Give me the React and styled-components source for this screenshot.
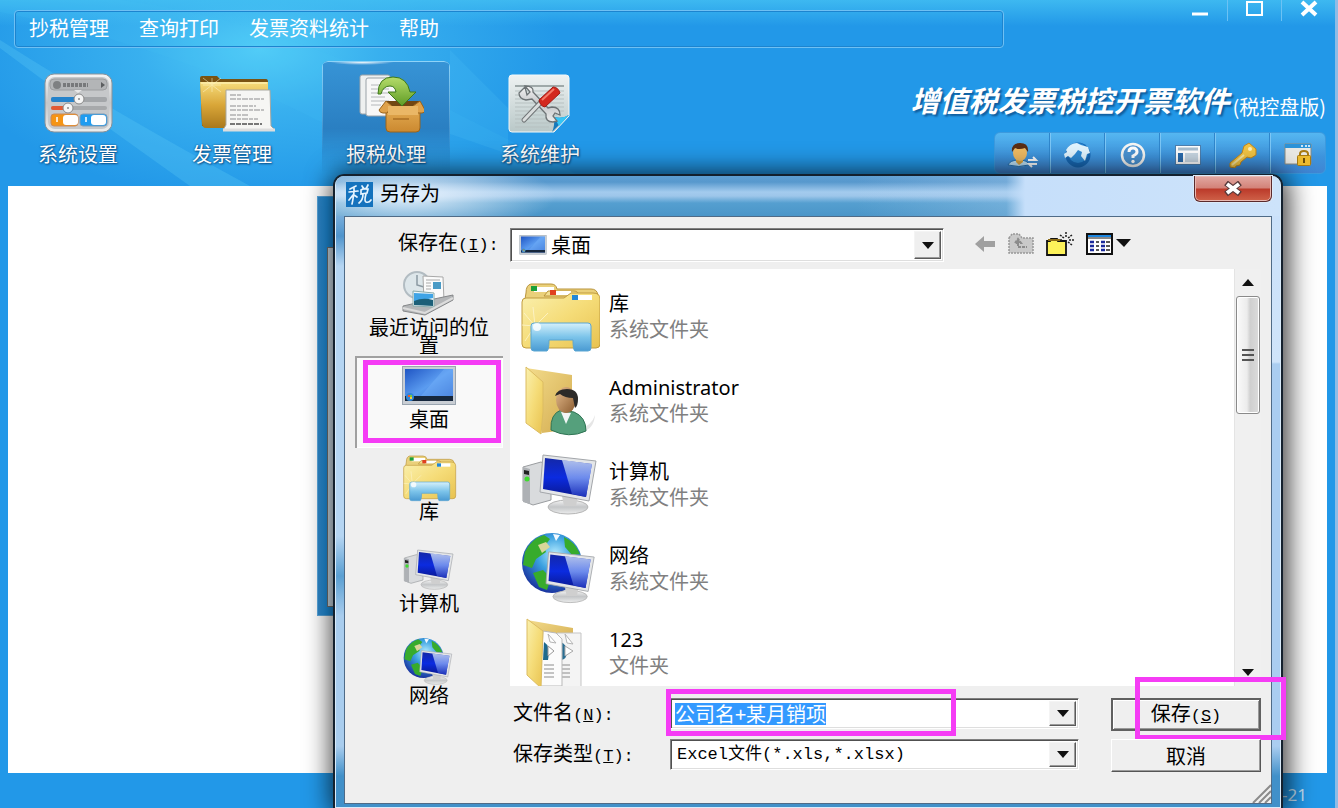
import React, { useEffect, useRef } from 'react';
import styled, { createGlobalStyle, css } from 'styled-components';

const GlobalStyle = createGlobalStyle`
    * {
        box-sizing: border-box;
    }
    body {
        margin: 0;
        font-family: 'Noto Sans', 'Noto Sans CJK SC', sans-serif;
        font-size: 20px;
        line-height: 26px;
        color: #000;
    }
    button, input, select {
        margin: 0;
        padding: 0;
        border: 0;
        background: none;
        font: inherit;
        color: inherit;
    }
    h1, h2, p, ul {
        margin: 0;
        padding: 0;
        font-weight: normal;
        list-style: none;
    }
    svg {
        display: block;
        flex: none;
    }
`;

const Page = styled.div`
    position: relative;
    display: flex;
    flex-direction: column;
    min-height: 100vh;
    overflow: hidden;
    background: #2298e8;
    border-right: 3px solid #8ebce6;
`;

const Header = styled.header`
    position: relative;
    height: 186px;
    background:
        linear-gradient(180deg, rgba(66, 190, 242, 0.85) 0, rgba(66, 190, 242, 0) 26px),
        radial-gradient(ellipse 300px 150px at 260px 50px, #52cdf7 0%, rgba(64, 184, 241, 0.75) 40%, rgba(34, 152, 232, 0) 100%),
        #2298e8;
`;

const Rays = styled.svg`
    position: absolute;
    left: 0;
    top: 0;
`;

const HeaderTop = styled.div`
    position: relative;
    display: flex;
    height: 61px;
    padding-left: 14px;
`;

const MenuBar = styled.nav`
    display: flex;
    flex: 1;
    align-items: center;
    gap: 30px;
    height: 38px;
    margin-top: 10px;
    padding-left: 14px;
    border: 1px solid #6fc0f3;
    border-radius: 4px;
    box-shadow: inset 0 0 0 1px #1c84cf;
`;

const MenuLink = styled.a`
    color: #fff;
    text-decoration: none;
`;

const WindowControls = styled.div`
    display: flex;
    flex: none;
    justify-content: flex-end;
    width: 331px;
`;

const WindowButton = styled.button`
    display: flex;
    justify-content: center;
    width: 54px;
    height: 21px;
    & + & {
        border-left: 1px solid #6cc2f4;
    }
`;

const HeaderMain = styled.div`
    position: relative;
    display: flex;
    justify-content: space-between;
    padding: 0 9px 0 14px;
`;

const ToolBar = styled.div`
    display: flex;
    gap: 26px;
`;

const ToolButton = styled.button`
    display: flex;
    flex-direction: column;
    align-items: center;
    width: 128px;
    height: 113px;
    padding-top: 12px;
    gap: 9px;
    color: #fff;
    text-shadow: 1px 1px 2px #0b4f87, 0 0 2px #0b4f87;
    border-radius: 6px 6px 0 0;
    ${p =>
        p.$active &&
        css`
            background:
                radial-gradient(ellipse 32px 3px at 40px 1px, #fff, rgba(255, 255, 255, 0)),
                linear-gradient(180deg, #8fd3f7, rgba(98, 180, 230, 0) 80%) left / 1px 100% no-repeat,
                linear-gradient(180deg, #8fd3f7, rgba(98, 180, 230, 0) 80%) right / 1px 100% no-repeat,
                linear-gradient(180deg, #3794d6 0, #2a7fc2 60%, rgba(42, 127, 194, 0) 100%);
            box-shadow: inset 0 2px 0 -1px #8fd3f7;
        `}
`;

const Side = styled.div`
    display: flex;
    flex-direction: column;
    align-items: flex-end;
`;

const Brand = styled.h1`
    display: flex;
    align-items: flex-end;
    height: 71px;
    padding-bottom: 13px;
    color: #fff;
    font-family: 'Noto Sans CJK SC', sans-serif;
    font-size: 29px;
    font-weight: bold;
    line-height: 40px;
    font-style: italic;
    text-shadow: 2px 2px 2px #0f5c9c;
`;

const Edition = styled.small`
    margin-left: 3px;
    font-size: 20px;
    font-weight: 400;
    font-style: normal;
    line-height: 24px;
    text-shadow: none;
`;

const QuickBar = styled.div`
    display: flex;
    height: 42px;
    border: 1px solid #3c9ade;
    border-radius: 6px;
    background: linear-gradient(180deg, #55b7f1 0, #3d93dc 60%, #3f85d3 100%);
`;

const QuickButton = styled.button`
    display: flex;
    align-items: center;
    justify-content: center;
    width: 55px;
    padding-top: 4px;
    & + & {
        border-left: 1px solid #7cc6f5;
        box-shadow: -1px 0 0 #2f86cc;
    }
`;

const Workspace = styled.main`
    flex: 1;
    min-height: 587px;
    margin: 0 8px;
    padding: 10px 0 0 309px;
    background: #fff;
`;

const ChildWindow = styled.div`
    width: 700px;
    max-width: 90%;
    height: 420px;
    padding: 50px 9px 8px;
    background: linear-gradient(90deg, #2f87c9, #1f93e4 9px);
    border: 1px solid #5aa7dd;
`;

const ChildBody = styled.div`
    height: 100%;
    border: 1px solid #777;
    background: #d8e8f4;
`;

const StatusBar = styled.footer`
    height: 35px;
    padding: 9px 28px 0 0;
    color: #c4e2f7;
    font-size: 17px;
    text-align: right;
`;

const Dialog = styled.section`
    position: absolute;
    top: 174px;
    left: 333px;
    right: 52px;
    border: 2px solid #14212e;
    border-bottom: 0;
    border-radius: 11px 11px 0 0;
    padding: 0 9px 4px;
    background:
        linear-gradient(180deg, rgba(65, 144, 201, 0) 570px, #4190c9 600px),
        linear-gradient(180deg, #c9e0fa 0, #4f94cc 60px, #b5d5f2 90px, #b5d5f2 360px, #5a9fd2 400px, #a9cdee 440px) left / 9px 100% no-repeat,
        linear-gradient(180deg, #c9e0fa 0, #cfe4fa 186px, #aacdf0 188px);
    box-shadow: inset 0 0 0 1px #d9ebfa, 2px 2px 26px 4px rgba(0, 0, 0, 0.75);
`;

const TitleBar = styled.header`
    display: flex;
    align-items: flex-start;
    gap: 7px;
    height: 40px;
    margin: 0 -8px;
    padding: 6px 8px 0 10px;
    border-radius: 8px 8px 0 0;
    background:
        radial-gradient(ellipse 150px 38px at 70px 20px, rgba(235, 244, 253, 0.95) 0, rgba(200, 224, 246, 0) 100%),
        linear-gradient(90deg, rgba(201, 223, 247, 0) 55%, rgba(200, 223, 248, 0.25) 71%, #c6dffa 73%, #cde3fa 100%),
        linear-gradient(180deg, #5e9fd3 0, #5798cd 6px, #a3cbee 16px, #9dc6ea 20px, #559fd0 27px, #4a95c8 100%);
`;

const DialogTitle = styled.h2`
    flex: 1;
    font-size: 20px;
    line-height: 24px;
`;

const CloseButton = styled.button`
    display: flex;
    align-items: center;
    justify-content: center;
    width: 78px;
    height: 26px;
    margin-top: -6px;
    border: 1px solid #5b2a2c;
    border-top: 0;
    border-radius: 0 0 6px 6px;
    background: linear-gradient(180deg, #e2a9a3 0, #d38278 48%, #bb3a2a 52%, #cf6249 100%);
    box-shadow: inset 0 0 0 1px #e9b9b2, 0 0 0 1px #dcebf9;
`;

const DialogBody = styled.form`
    position: relative;
    display: grid;
    grid-template-columns: 165px minmax(0, 1fr);
    grid-template-rows: 36px auto auto;
    padding: 11px 10px 31px 0;
    border: 1px solid #4f6b87;
    background: #efefef;
    font-family: 'Noto Sans CJK SC', sans-serif;
`;

const FieldLabel = styled.label`
    line-height: 28px;
    white-space: nowrap;
    padding-left: ${p => p.$indent}px;
`;

// latin parts of a label are set in the half-width face
const Latin = styled.span`
    font-family: 'Liberation Mono', monospace;
    font-size: 17px;
`;

const LookInRow = styled.div`
    display: flex;
    align-items: flex-start;
    gap: 30px;
`;

const Combo = styled.div`
    position: relative;
    display: flex;
    align-items: center;
    height: ${p => p.$height}px;
    ${p => p.$basis && `flex: 0 1 ${p.$basis}px;`}
    background: #fff;
    border: 1px solid;
    border-color: #808080 #fff #fff #808080;
    box-shadow: inset 2px 2px 0 -1px #505050, inset -1px -1px 0 #dedede;
    padding: 2px;
`;

const ComboSelect = styled.select`
    flex: 1;
    min-width: 0;
    appearance: none;
    outline: 0;
    padding-left: 4px;
    line-height: 24px;
    ${p => p.$latin && "font-family: 'Liberation Mono', 'Noto Sans CJK SC', monospace; font-size: 17px;"}
`;

const FileInput = styled.input`
    flex: 1;
    min-width: 0;
    height: 22px;
    padding-left: 2px;
    line-height: 20px;
    outline: 0;
    &::selection {
        background: #3399ff;
        color: #fff;
    }
`;

const ArrowBox = styled.span`
    display: flex;
    align-items: center;
    justify-content: center;
    width: 27px;
    height: 100%;
    border: 1px solid;
    border-color: #f4f4f4 #5a5a5a #5a5a5a #f4f4f4;
    box-shadow: inset -1px -1px 0 #9a9a9a;
    background: #efefef;
`;

const Tools = styled.div`
    display: flex;
    gap: 12px;
    padding-top: 3px;
`;

const IconButton = styled.button`
    display: flex;
    align-items: center;
    height: 26px;
`;

const Places = styled.ul`
    grid-row: 2 / 4;
    padding: 0 7px 0 10px;
`;

const Place = styled.li`
    position: relative;
    height: 92px;
    ${p =>
        p.$selected &&
        css`
            background: #f9f9f9;
            box-shadow: inset 2px 2px 0 #a0a0a0, inset -1px -1px 0 #fff;
        `}
`;

const PlaceButton = styled.button`
    display: flex;
    flex-direction: column;
    align-items: center;
    width: 100%;
    padding: 6px 12px 0;
    line-height: 18px;
`;

const ListBox = styled.div`
    display: flex;
    height: 417px;
    margin-top: 5px;
    background: #fff;
    overflow: hidden;
`;

const Files = styled.ul`
    flex: 1;
    padding: 6px 0 0 10px;
    font-family: 'Noto Sans', 'Noto Sans CJK SC', sans-serif;
`;

const FileRow = styled.li`
    display: flex;
    align-items: center;
    gap: 9px;
    height: 84px;
`;

const FileKind = styled.p`
    color: #808080;
`;

const ScrollBar = styled.div`
    display: flex;
    flex-direction: column;
    align-items: center;
    width: 27px;
    padding: 0 1px;
    background: #f0f0f0;
    border-left: 1px solid #e4e4e4;
`;

const ScrollButton = styled.button`
    display: flex;
    align-items: center;
    justify-content: center;
    width: 100%;
    height: 27px;
`;

const Thumb = styled.div`
    display: flex;
    align-items: center;
    justify-content: center;
    width: 100%;
    height: 118px;
    margin-bottom: auto;
    border: 1px solid #8a8a8a;
    border-radius: 3px;
    background: linear-gradient(90deg, #fafafa 0, #ececec 45%, #cfcfcf 60%, #dcdcdc 100%);
    box-shadow: inset 0 0 0 1px #fff;
`;

const SaveForm = styled.div`
    display: grid;
    grid-template-columns: 160px minmax(0, 1fr) 182px;
    grid-auto-rows: 33px;
    row-gap: 8px;
    align-items: start;
    margin-top: 12px;
`;

const PushButton = styled.button`
    position: relative;
    height: 33px;
    margin-left: 32px;
    line-height: 26px;
    background: #efefef;
    border: 1px solid;
    border-color: #fff #555 #555 #fff;
    box-shadow: inset -1px -1px 0 #9c9c9c;
    ${p =>
        p.$primary &&
        css`
            border: 2px solid #606060;
            box-shadow: inset 1px 1px 0 #fff, inset -1px -1px 0 #999;
        `}
`;

const Highlight = styled.span`
    position: absolute;
    inset: ${p => p.$inset};
    border: 5px solid #f53cf5;
    pointer-events: none;
`;

const Grip = styled.svg`
    position: absolute;
    right: 0;
    bottom: 0;
`;

/* ---- drawings ---- */

const Gradient = ({ id, stops, x2 = 0, y2 = 1 }) => (
    <linearGradient id={id} x1="0" y1="0" x2={x2} y2={y2}>
        {stops.map((c, i) => <stop key={i} offset={i / (stops.length - 1)} stopColor={c} />)}
    </linearGradient>
);

const HiddenSvg = styled.svg`
    position: absolute;
`;

const Defs = () => (
    <HiddenSvg width="0" height="0" aria-hidden="true">
        <defs>
            <Gradient id="silver" stops={['#f5f5f5', '#c4c6c8', '#eceded']} />
            <Gradient id="gold" stops={['#f6dc7c', '#d9a638', '#a9781c']} />
            <Gradient id="folder" stops={['#faf0ae', '#f5dc78', '#e8c250']} x2={1} />
            <Gradient id="folderDark" stops={['#f3dc8c', '#d3ab4e']} x2={1} />
            <Gradient id="stand" stops={['#d5f0fb', '#7cc4ea', '#4a9ad2']} />
            <Gradient id="screen" stops={['#1428a8', '#0b2be0', '#0a1890']} />
            <Gradient id="shine" stops={['#e3f1ff', '#8aa8f0', '#2038c8']} />
            <Gradient id="desk" stops={['#1f55c4', '#5b9cf0', '#2a62cc']} x2={1} />
            <Gradient id="box" stops={['#e9b35a', '#cb8930']} />
            <Gradient id="green" stops={['#b5dc6a', '#5f9c25']} />
            <Gradient id="paper" stops={['#eef2f2', '#b9c8c8']} />
            <Gradient id="person" stops={['#e6bd8e', '#8a5a2e']} x2={1} />
            <radialGradient id="globe" cx="0.55" cy="0.35" r="0.65">
                <stop offset="0" stopColor="#b5ecff" />
                <stop offset="0.45" stopColor="#3aa0e0" />
                <stop offset="1" stopColor="#1a35a0" />
            </radialGradient>
        </defs>
    </HiddenSvg>
);

const SettingsIcon = () => (
    <svg width="76" height="60" viewBox="0 0 76 60">
        <rect x="5" y="1" width="67" height="58" rx="9" fill="url(#silver)" stroke="#8b9298" />
        <rect x="8" y="4" width="61" height="52" rx="7" fill="#c6c8ca" />
        <rect x="10" y="6" width="57" height="11" rx="4" fill="#b3b5b7" stroke="#9c9ea0" />
        <circle cx="17" cy="12" r="4" fill="#7e8082" />
        <path d="M23 12h25" stroke="#77797b" strokeWidth="4" strokeDasharray="3 1" />
        <path d="M61 9l4 3-4 3z" fill="#5c5e60" />
        <path d="M34 17h8l-4 3z" fill="#e8e8e8" />
        <rect x="11" y="24" width="56" height="5" rx="2" fill="#a3a6a9" />
        <rect x="11" y="24" width="27" height="5" rx="2" fill="#2583cb" />
        <rect x="11" y="33" width="56" height="4" rx="2" fill="#a7a9ab" />
        <rect x="11" y="33" width="16" height="4" rx="2" fill="#e25a34" />
        <circle cx="39" cy="26" r="5" fill="#f5f5f5" stroke="#888" />
        <circle cx="28" cy="35" r="5" fill="#f5f5f5" stroke="#888" />
        <circle cx="39" cy="26" r="1" fill="#888" />
        <circle cx="28" cy="35" r="1" fill="#888" />
        <rect x="11" y="41" width="27" height="12" rx="3" fill="#f59414" stroke="#c98a5a" />
        <rect x="23" y="42" width="15" height="10" rx="3" fill="#fff" />
        <rect x="40" y="41" width="27" height="12" rx="3" fill="#1f9cf0" stroke="#7d9cb8" />
        <rect x="51" y="42" width="15" height="10" rx="3" fill="#fff" />
        <path d="M17 44v5M46 44v5" stroke="#fff" strokeWidth="1.5" />
    </svg>
);

const InvoiceIcon = () => (
    <svg width="86" height="60" viewBox="-10 0 86 60">
        <path d="M1 5q0-2 2-2h15l3 3h46q2 0 2 3v44H3z" fill="#7a5312" />
        <path d="M1 9h68v41q0 5-5 5H7q-4 0-4-5z" fill="url(#gold)" />
        <path d="M2 10h66" stroke="#fbe9a0" strokeWidth="2" />
        <path d="M4 5l18 14M22 5L4 19M13 5v14M4 12h18" stroke="#fff8d2" strokeWidth="1" opacity="0.5" />
        <path d="M27 17h44l1 36 4 4H24l3-5z" fill="#f6f6f4" stroke="#a7a7a0" />
        <path d="M31 22h12M31 26h34M31 33h26M31 37h34M31 42h18M31 46h28" stroke="#b0b0b0" strokeWidth="1.6" strokeDasharray="6 1 4 1" />
        <path d="M31 51h32" stroke="#777" strokeWidth="1.8" strokeDasharray="5 1" />
        <path d="M24 57h52" stroke="#ddd" strokeWidth="3" />
    </svg>
);

const TaxReportIcon = () => (
    <svg width="76" height="60" viewBox="0 0 76 60">
        <rect x="12" y="2" width="30" height="39" rx="2" fill="#eef0f0" stroke="#9aa2a8" />
        <rect x="18" y="5" width="30" height="38" rx="2" fill="#f7f7f7" stroke="#9aa2a8" />
        <path d="M23 12h20M23 16h18M23 20h20M23 24h14M23 28h18M23 32h10" stroke="#b4b7ba" />
        <path d="M38 29h34v26q0 4-4 4H42q-4 0-4-4z" fill="url(#box)" stroke="#9a641c" />
        <path d="M38 28h34l-4 6H42z" fill="#714713" />
        <path d="M38 28l-7 9q1 3 4 3h4l5-7zM72 28l5 9q0 3-3 3h-4l-5-7z" fill="#dfa24b" stroke="#9a641c" />
        <path d="M40 33h30v9H40z" fill="#eab766" />
        <rect x="45" y="45" width="16" height="2" fill="#b5792a" />
        <path d="M30 21Q30 4 45 4q14 0 17 15h6L54 33 40 19h8Q47 13 42 13q-7 0-9 8z" fill="url(#green)" stroke="#3e7a1a" />
    </svg>
);

const MaintainIcon = () => (
    <svg width="76" height="60" viewBox="0 0 76 60">
        <path d="M7 5q0-3 3-3h54q3 0 3 3v38L52 59H10q-3 0-3-3z" fill="url(#paper)" stroke="#f4f8f8" />
        <path d="M13 13h49" stroke="#9fa9a9" strokeWidth="2" />
        <path d="M13 18h49M13 22h49M13 26h49M13 30h49M13 34h49M13 38h49M13 42h42M13 46h38M13 50h36M13 54h34" stroke="#b7c1c1" />
        <path d="M67 42L50 59q3-6 2-15 9 2 15-2z" fill="#1679bb" />
        <path d="M52 44q8 2 15-2L57 53z" fill="#35c5f5" />
        <path d="M23 14l-6 6q0 6 7 7l6-1 14 15q-1 8 7 8l4-1-4-5 2-3 5 2q0-8-8-8l-4 1-15-16q1-6-8-6l5 6-3 3z" fill="url(#silver)" stroke="#6d7375" strokeWidth="1.3" />
        <path d="M22 47l19-20" stroke="#707476" strokeWidth="5" strokeLinecap="round" />
        <path d="M22 47l19-20" stroke="#d9dddd" strokeWidth="3" strokeLinecap="round" />
        <path d="M37 27L51 14q5 0 7 6L43 34q-5-1-6-7z" fill="#d3281e" stroke="#a31710" />
        <path d="M40 27l12-11" stroke="#f47a68" strokeWidth="2" />
    </svg>
);

const UserIcon = () => (
    <svg width="32" height="26" viewBox="0 0 32 26">
        <path d="M1 23q2-5 11-5t10 5q-10 3-21 0z" fill="#bfe4fa" stroke="#2572b4" />
        <path d="M9 15h7v5l-4 3-3-3z" fill="#dba33e" />
        <ellipse cx="13" cy="11" rx="7" ry="8" fill="#f0bb62" />
        <path d="M5 10Q4 1 13 1t8 9l-3-4q-6 2-10 0z" fill="#5a2d14" />
        <path d="M21 18h8l-3-3M30 22h-8l3 3" fill="none" stroke="#fff" strokeWidth="2" />
    </svg>
);

const EarthIcon = () => (
    <svg width="28" height="26" viewBox="0 0 28 26">
        <circle cx="14" cy="13" r="12.5" fill="#1768b4" />
        <circle cx="14" cy="11" r="10" fill="#2e8bd5" />
        <path d="M2 8q4-7 11-7l4 2 7 2 2 6-3 1-2 7-4-5 1-4-4-2-3 4-4 4-3-2-3 2-1-4 3-2z" fill="#e2f5ff" />
    </svg>
);

const HelpIcon = () => (
    <svg width="28" height="26" viewBox="0 0 28 26">
        <circle cx="14" cy="13" r="11" fill="#4a93d3" stroke="#f6f6f4" strokeWidth="2.5" />
        <path d="M10 10q0-4 4-4t4 4q0 2-4 4v2" fill="none" stroke="#fff" strokeWidth="3" />
        <circle cx="14" cy="19.5" r="1.7" fill="#fff" />
    </svg>
);

const LayoutIcon = () => (
    <svg width="26" height="22" viewBox="0 0 26 22">
        <rect x="0.5" y="1.5" width="25" height="19" fill="#fff" stroke="#4e7fae" />
        <path d="M3 5h20" stroke="#a9bfd1" strokeWidth="3" />
        <rect x="3" y="9" width="5" height="9" fill="#2b6cae" />
        <rect x="10" y="9" width="13" height="9" fill="#c9d8e4" />
    </svg>
);

const KeyIcon = () => (
    <svg width="28" height="26" viewBox="0 0 28 26">
        <path d="M15 4l5-3 7 6v6l-5 3-4-1-6 5-1 3-4 1-1 2-5-1v-4L13 11z" fill="#f3c544" stroke="#c4871b" />
        <path d="M3 23l12-10" stroke="#fbe79c" strokeWidth="2" />
        <circle cx="21" cy="7" r="2" fill="#fff3bd" />
    </svg>
);

const LockIcon = () => (
    <svg width="28" height="24" viewBox="0 0 28 24">
        <path d="M1 1h26v20H1z" fill="#e9e9e5" stroke="#8a8a80" />
        <path d="M1 1h26v4H1z" fill="#2c93d8" />
        <path d="M17 3h2M21 3h2M24 3h2" stroke="#fff" strokeWidth="1.5" />
        <path d="M16 13v-2q0-3 4-3t4 3v2" fill="none" stroke="#a87b13" strokeWidth="2" />
        <rect x="13.5" y="12.5" width="13" height="10" rx="1" fill="#eebd2f" stroke="#a87b13" />
        <path d="M20 15v5" stroke="#6b4d08" strokeWidth="2" />
    </svg>
);

const AppIcon = () => (
    <svg width="27" height="25" viewBox="0 0 27 25">
        <rect width="27" height="25" fill="#1572bd" />
        <path
            d="M10 4L4 7M8 6v4M3 10l9-1M8 10q-1 8-2 12M7 13l-4 5M8 13l3 2M16 4l2 3M22 3l-2 4M15 8q3-2 7-1l-1 4-6 1zM17 12q0 6-4 9M20 12q-2 7 0 8 3 1 5-2"
            fill="none"
            stroke="#e6f4ff"
            strokeWidth="1.7"
            strokeLinecap="round"
        />
    </svg>
);

const LibraryIcon = ({ width = 80, height = 72 }) => (
    <svg width={width} height={height} viewBox="0 0 80 72">
        <path d="M6 12q0-8 5-9h20q5 0 6 5h34q6 0 7 6v10H4z" fill="#ead07a" stroke="#b9943c" />
        <path d="M14 6h20v5H14z" fill="#fff" />
        <rect x="11" y="5" width="6" height="5" fill="#1ba03a" />
        <path d="M24 15l4-5h26q4 0 5 5z" fill="#f3df92" stroke="#b9943c" />
        <path d="M34 10h17v4H34z" fill="#fff" />
        <rect x="30" y="9" width="6" height="5" fill="#e04020" />
        <path d="M2 21q0-4 4-4h38l7-5h22q7 0 7 6v45q0 4-4 4H6q-4 0-4-4z" fill="url(#folder)" stroke="#c19c40" />
        <path d="M55 14h17v5H55z" fill="#fff" />
        <rect x="52" y="14" width="6" height="5" fill="#2288d8" />
        <path d="M15 45L4 32M15 45L2 44M15 45L13 26M15 45L28 32M15 45L5 60" stroke="#fff8d8" opacity="0.7" />
        <path d="M11 45q0-3 3-3h54q3 0 3 3v22q0 3-3 3H55q-2-1-2-11H29q0 10-2 11H14q-3 0-3-3z" fill="url(#stand)" stroke="#5ba6d2" />
        <circle cx="17" cy="46" r="4" fill="#fff" opacity="0.8" />
    </svg>
);

const UserFolderIcon = () => (
    <svg width="80" height="72" viewBox="0 0 80 72">
        <path d="M60 64q12-4 15-14-1 14-13 17z" fill="#e6e6e6" />
        <path d="M6 3l46 7v54L22 68z" fill="url(#folderDark)" />
        <path d="M6 2l17 15v30l-2 22L6 58z" fill="url(#folder)" stroke="#dcbc62" />
        <path d="M31 65q-1-16 10-20l13 2q12 5 12 19-17 8-35-1z" fill="#55a07c" stroke="#2f7454" />
        <path d="M41 47l5 12 5-11z" fill="#f2f6f6" />
        <ellipse cx="46" cy="35" rx="10" ry="13" fill="url(#person)" />
        <path d="M35 31q2-7 12-7 11 0 11 10 0 7-3 9l-2-10q-8 0-13-4z" fill="#2c2a28" />
    </svg>
);

const Monitor = ({ x, y, s = 1 }) => (
    <g transform={`translate(${x} ${y}) scale(${s})`}>
        <ellipse cx="28" cy="53" rx="20" ry="7" fill="url(#silver)" stroke="#b5b5b5" />
        <path d="M22 42h16l-2 10H24z" fill="#cfcfcf" />
        <path d="M3 1l53 6-7 40L0 38z" fill="#e4e6e8" stroke="#a3a6aa" />
        <path d="M5 4l47 6-6 33L3 35z" fill="url(#screen)" />
        <path d="M22 6l30 4-6 33-14-3z" fill="url(#shine)" opacity="0.75" />
    </g>
);

const ComputerIcon = ({ width = 80, height = 72 }) => (
    <svg width={width} height={height} viewBox="0 0 80 72">
        <path d="M3 18l18-5 10 4v34l-18 5-10-4z" fill="#d9dbdd" stroke="#9a9da0" />
        <path d="M3 18l7 2v35l-7-2z" fill="#aeb1b5" />
        <path d="M4 21l5 1v4l-5-1z" fill="#222" />
        <circle cx="7" cy="30" r="2.5" fill="#3fdc2e" />
        <Monitor x={20} y={5} />
    </svg>
);

const NetworkIcon = ({ width = 80, height = 72 }) => (
    <svg width={width} height={height} viewBox="0 0 80 72">
        <circle cx="32" cy="30" r="30" fill="url(#globe)" />
        <path d="M5 19Q11 6 24 2l6 4-6 8 2 5-10 7-4 9-9-3zM13 40l10-3 8 8-4 12-8-3zM44 4q11 5 16 17l-8 1-7-8z" fill="#37ab2c" />
        <path d="M18 12l8-3 4 5-8 6z" fill="#d9d69a" />
        <path d="M33 1l7 1-4 6z" fill="#f2f9ff" />
        <Monitor x={26} y={18} s={0.86} />
    </svg>
);

const DocsFolderIcon = () => (
    <svg width="80" height="72" viewBox="0 0 80 72">
        <path d="M7 3l46 8v18L20 20z" fill="url(#folderDark)" />
        <path d="M37 16h24v54H34z" fill="#f4f4f4" stroke="#c5c5c5" />
        <path d="M41 25q6 3 6 10t-6 8z" fill="#2b6f93" />
        <path d="M45 29l8 5-8 5z" fill="#fff" stroke="#aaa" />
        <path d="M45 17l2 9 6 1z" fill="#fff" stroke="#b5b5b5" />
        <path d="M42 48h8M42 52h8M42 56h8M42 60h8" stroke="#8c8c8c" />
        <path d="M23 14l13 2 6 6v47H20z" fill="#fcfcfc" stroke="#b9b9b9" />
        <path d="M24 25q7 4 4 18h-5z" fill="#1f6a8c" />
        <path d="M28 29l6 5-6 5z" fill="#fff" stroke="#999" />
        <path d="M28 17l2 8 6 1z" fill="#fff" stroke="#b5b5b5" />
        <path d="M24 48h10M24 52h10M24 56h10M24 60h10" stroke="#8c8c8c" />
        <path d="M7 2l16 12-2 57L7 58z" fill="url(#folder)" stroke="#dcbc62" />
    </svg>
);

const DesktopIcon = ({ width = 54, height = 40 }) => (
    <svg width={width} height={height} viewBox="0 0 54 40">
        <rect x="0.5" y="0.5" width="53" height="38" fill="#c9ced4" stroke="#9aa5b0" />
        <rect x="3" y="3" width="48" height="32" fill="url(#desk)" />
        <path d="M18 31L42 3h9v28z" fill="#78b4fa" opacity="0.4" />
        <rect x="3" y="30" width="48" height="5" fill="#16273c" />
        <circle cx="8" cy="31" r="4" fill="#2f86d8" />
        <path d="M6 29h2v2H6z" fill="#f05a2a" />
        <path d="M8 29h2v2H8z" fill="#7cc93c" />
        <path d="M8 31h2v2H8z" fill="#f8cf3c" />
    </svg>
);

const RecentIcon = () => (
    <svg width="56" height="48" viewBox="0 0 56 48">
        <circle cx="16" cy="15" r="13" fill="#dde6ea" stroke="#b2bcc2" strokeWidth="2" />
        <path d="M16 5v10l7 2" fill="none" stroke="#8b99a2" strokeWidth="1.5" />
        <path d="M22 6l20 1 1 24-20 1z" fill="#fbfbfb" stroke="#a8a8a8" />
        <path d="M25 10h14M25 13h5M25 16h5M25 19h5" stroke="#a9a9a9" />
        <rect x="32" y="12" width="8" height="7" fill="#4a9ac5" />
        <path d="M2 36l31-7 19-4v5L24 45 2 41z" fill="#b4b6b8" stroke="#858789" />
        <path d="M12 21l21 2v14l-21-1z" fill="#eef6fb" stroke="#8aa" />
        <path d="M13 23l19 1v4l-19 4z" fill="#3fa4e6" />
        <path d="M13 31q9-4 19-1v6l-19-1z" fill="#1c5f78" />
        <path d="M2 38l22 5 28-15" fill="none" stroke="#dcdcdc" strokeWidth="2" />
    </svg>
);

const Arrow = ({ up = false }) => (
    <svg width="12" height="7" viewBox="0 0 12 7" aria-hidden="true">
        <path d={up ? 'M0 7L6 0l6 7z' : 'M0 0h12L6 7z'} fill="#111" />
    </svg>
);

const BackIcon = () => (
    <svg width="22" height="16" viewBox="0 0 22 16">
        <path d="M1 8l9-8v5h11v6H10v5z" fill="#a0a0a0" />
    </svg>
);

const UpFolderIcon = () => (
    <svg width="26" height="22" viewBox="0 0 26 22">
        <path d="M1 5l3-4h7l3 4h11v15H1z" fill="#c9c9c9" stroke="#989898" strokeWidth="1.5" strokeDasharray="2 1" />
        <path d="M10 7v6M7 10l3-4 3 4zM10 14h9" stroke="#8b8b8b" strokeWidth="2" fill="#8b8b8b" strokeDasharray="3 1" />
    </svg>
);

const NewFolderIcon = () => (
    <svg width="28" height="26" viewBox="0 0 28 26">
        <path d="M1 10h3l1-2h6l1 2h8v14H1z" fill="#fdf25a" stroke="#111" strokeWidth="1.8" />
        <path d="M2 9h12" stroke="#8a6a14" strokeWidth="2" />
        <path d="M20 1v5M20 12v4M14 4l4 3M26 4l-4 3M23 9h5M14 9h3M26 14l-4-3" stroke="#222" strokeWidth="1.5" strokeDasharray="2 1" />
    </svg>
);

const ViewsIcon = () => (
    <svg width="45" height="22" viewBox="0 0 45 22">
        <rect x="1" y="1" width="25" height="20" fill="#fff" stroke="#111" strokeWidth="2" />
        <path d="M2 3h23" stroke="#1b86e0" strokeWidth="2" />
        <path d="M2 5h23" stroke="#111" />
        <path d="M4 9h4M4 13h4M4 17h4M15 9h4M15 13h4M15 17h4" stroke="#1a2a9c" strokeWidth="2.5" />
        <path d="M10 9h3M10 13h3M10 17h3M20 9h4M20 13h4M20 17h4" stroke="#222" strokeWidth="1.5" />
        <path d="M30 6h15l-7 8z" fill="#111" />
    </svg>
);

const menus = ['抄税管理', '查询打印', '发票资料统计', '帮助'];

const tools = [
    { label: '系统设置', Icon: SettingsIcon },
    { label: '发票管理', Icon: InvoiceIcon },
    { label: '报税处理', Icon: TaxReportIcon, active: true },
    { label: '系统维护', Icon: MaintainIcon }
];

const quick = [
    { label: '切换用户', Icon: UserIcon },
    { label: '网站', Icon: EarthIcon },
    { label: '帮助', Icon: HelpIcon },
    { label: '界面', Icon: LayoutIcon },
    { label: '密码', Icon: KeyIcon },
    { label: '锁定', Icon: LockIcon }
];

const places = [
    { label: '最近访问的位置', icon: <RecentIcon /> },
    { label: '桌面', icon: <DesktopIcon height={48} />, selected: true },
    { label: '库', icon: <LibraryIcon width={56} height={48} /> },
    { label: '计算机', icon: <ComputerIcon width={56} height={48} /> },
    { label: '网络', icon: <NetworkIcon width={56} height={48} /> }
];

const files = [
    { name: '库', kind: '系统文件夹', Icon: LibraryIcon },
    { name: 'Administrator', kind: '系统文件夹', Icon: UserFolderIcon },
    { name: '计算机', kind: '系统文件夹', Icon: ComputerIcon },
    { name: '网络', kind: '系统文件夹', Icon: NetworkIcon },
    { name: '123', kind: '文件夹', Icon: DocsFolderIcon }
];

const Hotkey = ({ letter, colon }) => (
    <Latin>
        (<u>{letter}</u>){colon && ':'}
    </Latin>
);

const AppHeader = () => (
    <Header>
        <Rays width="620" height="186" aria-hidden="true">
            <path d="M0 48q80 60 190 138h60Q110 110 0 40z" fill="#5ccaf6" opacity="0.3" />
            <path d="M0 0h120q160 20 330 110L600 186H430Q240 60 0 12z" fill="#4cc6f5" opacity="0.12" />
            <path d="M450 50l58 58v46l-58-20z" fill="#46bdf2" opacity="0.25" />
        </Rays>
        <HeaderTop>
            <MenuBar>
                {menus.map(m => <MenuLink key={m} href="#">{m}</MenuLink>)}
            </MenuBar>
            <WindowControls>
                <WindowButton aria-label="最小化">
                    <svg width="16" height="20"><path d="M0 14h16" stroke="#fff" strokeWidth="3" /></svg>
                </WindowButton>
                <WindowButton aria-label="最大化">
                    <svg width="18" height="20"><rect x="1" y="2" width="15" height="13" fill="none" stroke="#fff" strokeWidth="2" /></svg>
                </WindowButton>
                <WindowButton aria-label="关闭">
                    <svg width="18" height="20"><path d="M2 2l14 13M16 2L2 15" stroke="#fff" strokeWidth="4" /></svg>
                </WindowButton>
            </WindowControls>
        </HeaderTop>
        <HeaderMain>
            <ToolBar>
                {tools.map(({ label, Icon, active }) => (
                    <ToolButton key={label} $active={active}>
                        <Icon />
                        {label}
                    </ToolButton>
                ))}
            </ToolBar>
            <Side>
                <Brand>
                    增值税发票税控开票软件<Edition>(税控盘版)</Edition>
                </Brand>
                <QuickBar>
                    {quick.map(({ label, Icon }) => (
                        <QuickButton key={label} aria-label={label}>
                            <Icon />
                        </QuickButton>
                    ))}
                </QuickBar>
            </Side>
        </HeaderMain>
    </Header>
);

const SaveDialog = () => {
    const fileName = useRef(null);

    useEffect(() => {
        fileName.current.focus({ preventScroll: true });
        fileName.current.select();
    }, []);

    return (
        <Dialog role="dialog" aria-labelledby="save-title">
            <TitleBar>
                <AppIcon />
                <DialogTitle id="save-title">另存为</DialogTitle>
                <CloseButton aria-label="关闭">
                    <svg width="20" height="16" viewBox="0 0 20 16">
                        <path d="M3 2l14 11M17 2L3 13" stroke="#55393a" strokeWidth="6" />
                        <path d="M4 3l12 9M16 3L4 12" stroke="#fff" strokeWidth="4" />
                    </svg>
                </CloseButton>
            </TitleBar>
            <DialogBody onSubmit={e => e.preventDefault()}>
                <FieldLabel htmlFor="look-in" $indent={53}>
                    保存在<Hotkey letter="I" colon />
                </FieldLabel>
                <LookInRow>
                    <Combo $height={34} $basis={434}>
                        <svg width="6" height="1" />
                        <DesktopIcon width={28} height={20} />
                        <ComboSelect id="look-in">
                            <option>桌面</option>
                        </ComboSelect>
                        <ArrowBox><Arrow /></ArrowBox>
                    </Combo>
                    <Tools>
                        <IconButton type="button" aria-label="后退"><BackIcon /></IconButton>
                        <IconButton type="button" aria-label="向上一级"><UpFolderIcon /></IconButton>
                        <IconButton type="button" aria-label="新建文件夹"><NewFolderIcon /></IconButton>
                        <IconButton type="button" aria-label="查看"><ViewsIcon /></IconButton>
                    </Tools>
                </LookInRow>
                <Places>
                    {places.map(({ label, icon, selected }) => (
                        <Place key={label} $selected={selected}>
                            <PlaceButton type="button">
                                {icon}
                                {label}
                            </PlaceButton>
                            {selected && <Highlight $inset="4px 2px 5px 8px" />}
                        </Place>
                    ))}
                </Places>
                <ListBox>
                    <Files>
                        {files.map(({ name, kind, Icon }) => (
                            <FileRow key={name}>
                                <Icon />
                                <div>
                                    <p>{name}</p>
                                    <FileKind>{kind}</FileKind>
                                </div>
                            </FileRow>
                        ))}
                    </Files>
                    <ScrollBar>
                        <ScrollButton type="button" aria-label="向上滚动"><Arrow up /></ScrollButton>
                        <Thumb>
                            <svg width="12" height="14"><path d="M0 2h12M0 7h12M0 12h12" stroke="#555" strokeWidth="2" /></svg>
                        </Thumb>
                        <ScrollButton type="button" aria-label="向下滚动"><Arrow /></ScrollButton>
                    </ScrollBar>
                </ListBox>
                <SaveForm>
                    <FieldLabel htmlFor="file-name" $indent={3}>
                        文件名<Hotkey letter="N" colon />
                    </FieldLabel>
                    <Combo $height={31}>
                        <FileInput id="file-name" ref={fileName} defaultValue="公司名+某月销项" />
                        <ArrowBox><Arrow /></ArrowBox>
                        <Highlight $inset="-10px 122px -8px -5px" />
                    </Combo>
                    <PushButton $primary>
                        保存<Hotkey letter="S" />
                        <Highlight $inset="-23px -27px -11px 22px" />
                    </PushButton>
                    <FieldLabel htmlFor="file-type" $indent={3}>
                        保存类型<Hotkey letter="T" colon />
                    </FieldLabel>
                    <Combo $height={31}>
                        <ComboSelect id="file-type" $latin>
                            <option>Excel文件(*.xls,*.xlsx)</option>
                        </ComboSelect>
                        <ArrowBox><Arrow /></ArrowBox>
                    </Combo>
                    <PushButton type="button">取消</PushButton>
                </SaveForm>
                <Grip width="20" height="20" aria-hidden="true">
                    <path d="M2 20L20 2M8 20L20 8M14 20l6-6" stroke="#8b8b8b" strokeWidth="2" />
                </Grip>
            </DialogBody>
        </Dialog>
    );
};

const App = () => (
    <Page>
        <GlobalStyle />
        <Defs />
        <AppHeader />
        <Workspace>
            <ChildWindow>
                <ChildBody />
            </ChildWindow>
        </Workspace>
        <StatusBar>-21</StatusBar>
        <SaveDialog />
    </Page>
);

export default App;
